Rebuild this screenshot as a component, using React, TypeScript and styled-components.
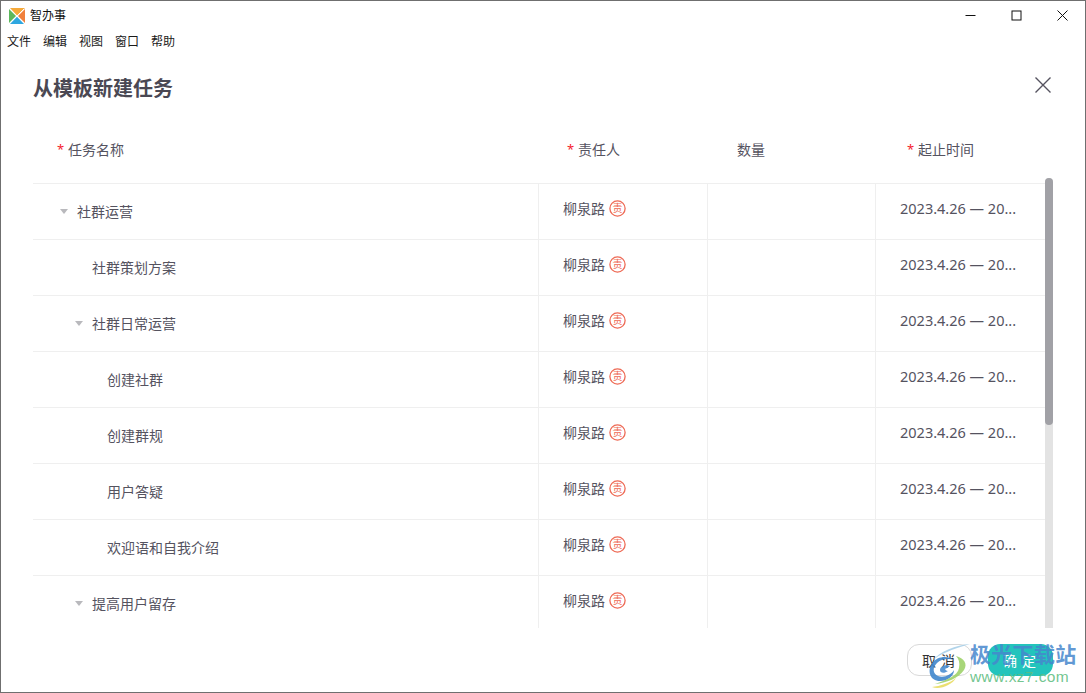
import React from "react";
import styled, { createGlobalStyle } from "styled-components";

const Global = createGlobalStyle`
  html, body { margin: 0; padding: 0; background: #fff; }
  body { font-family: "Noto Sans", "Noto Sans CJK SC", sans-serif; }
  * { box-sizing: border-box; }
`;

const Win = styled.div`
  position: relative;
  width: 1086px;
  height: 693px;
  background: #fff;
  border: 1px solid #6f6f6f;
  display: flex;
  flex-direction: column;
  overflow: hidden;
`;

const TitleBar = styled.div`
  height: 29px;
  flex: none;
  display: flex;
  align-items: center;
  padding-left: 8px;
  gap: 5px;
  font-size: 12px;
  color: #111;
`;
const AppName = styled.span`
  position: relative;
  top: -1px;
`;
const WinButtons = styled.div`
  margin-left: auto;
  display: flex;
  align-items: center;
`;
const WinBtn = styled.div`
  width: 46px;
  height: 29px;
  display: flex;
  align-items: center;
  justify-content: center;
`;
const Menu = styled.div`
  height: 23px;
  flex: none;
  display: flex;
  padding-left: 6px;
  gap: 12px;
  font-size: 12px;
  line-height: 23px;
  color: #1a1a1a;
`;
const Dialog = styled.div`
  flex: 1;
  display: flex;
  flex-direction: column;
  padding: 0 32px 0 32px;
  min-height: 0;
`;
const TitleRow = styled.div`
  height: 74px;
  flex: none;
  display: flex;
  justify-content: space-between;
  align-items: flex-start;
`;
const Title = styled.div`
  font-size: 20px;
  font-weight: 700;
  color: #4a4853;
  line-height: 28px;
  margin-top: 22px;
`;
const CloseBtn = styled.div`
  margin: 23px 1px 0 0;
  width: 18px;
  height: 18px;
  display: flex;
`;
const Body = styled.div`
  height: 501px;
  flex: none;
  display: flex;
  overflow: hidden;
`;
const Table = styled.div`
  width: 1012px;
  flex: none;
`;
const HeadRow = styled.div`
  display: grid;
  grid-template-columns: 506px 169px 168px 169px;
  height: 57px;
  align-items: center;
  border-bottom: 1px solid #efefef;
  font-size: 14px;
  color: #55535f;
`;
const HeadCell = styled.div<{ $pad: number }>`
  padding-left: ${(p) => p.$pad}px;
  margin-top: -13px;
  display: flex;
  align-items: center;
  white-space: nowrap;
`;
const Star = styled.span`
  color: #f5222d;
  font-size: 13px;
  width: 11px;
  line-height: 1;
  position: relative;
  top: 1px;
`;
const Row = styled.div`
  display: grid;
  grid-template-columns: 506px 169px 168px 169px;
  height: 56px;
  border-bottom: 1px solid #efefef;
  font-size: 14px;
  color: #55535f;
`;
const Cell = styled.div`
  border-right: 1px solid #efefef;
  display: flex;
  align-items: center;
  white-space: nowrap;
  &:last-child { border-right: none; }
`;
const NameCell = styled(Cell)<{ $indent: number }>`
  padding-left: ${(p) => p.$indent}px;
  padding-bottom: 1px;
`;
const Caret = styled.span`
  width: 0;
  height: 0;
  border-left: 4.5px solid transparent;
  border-right: 4.5px solid transparent;
  border-top: 5px solid #b9b9bd;
  margin-right: 9px;
  margin-left: -18px;
`;
const PersonCell = styled(Cell)`
  padding-left: 24px;
  padding-bottom: 8px;
  gap: 4px;
`;
const BadgeIcon = styled.svg`
  margin-top: 2px;
`;
const DateCell = styled(Cell)`
  padding-left: 24px;
  padding-bottom: 8px;
  font-size: 14.5px;
`;
const Scroll = styled.div`
  position: relative;
  width: 8px;
  flex: none;
  background: #e3e3e3;
  margin-top: 51px;
  border-radius: 4px 4px 0 0;
`;
const Thumb = styled.div`
  height: 247px;
  background: #a1a1a6;
  border-radius: 4px;
`;
const Footer = styled.div`
  flex: 1;
  display: flex;
  justify-content: flex-end;
  align-items: flex-start;
  padding-top: 16px;
  gap: 16px;
`;
const Btn = styled.div<{ $primary?: boolean }>`
  width: 65px;
  height: 32px;
  border-radius: 12px;
  display: flex;
  align-items: center;
  justify-content: center;
  font-size: 14px;
  letter-spacing: 5px;
  text-indent: 3px;
  color: ${(p) => (p.$primary ? "#fff" : "#333")};
  background: ${(p) => (p.$primary ? "#23c4bc" : "#fff")};
  border: ${(p) => (p.$primary ? "none" : "1px solid #d9d9d9")};
`;
const Watermark = styled.div`
  position: absolute;
  left: 925px;
  top: 640px;
  width: 160px;
  height: 50px;
  pointer-events: none;
`;
const WmCn = styled.div`
  position: absolute;
  left: 44px;
  top: -1px;
  font-size: 21px;
  font-weight: 700;
  line-height: 28px;
  letter-spacing: 0.3px;
  color: rgba(70, 135, 205, 0.85);
  white-space: nowrap;
`;
const WmEn = styled.div`
  position: absolute;
  left: 44px;
  top: 26px;
  font-size: 15.5px;
  line-height: 20px;
  letter-spacing: 0.4px;
  font-family: "Liberation Sans", sans-serif;
  color: rgba(95, 190, 130, 0.9);
  white-space: nowrap;
`;
const WmLogo = styled.svg`
  position: absolute;
  left: 0;
  top: 0;
`;

const rows: [string, number, boolean][] = [
  ["社群运营", 45, true],
  ["社群策划方案", 59, false],
  ["社群日常运营", 60, true],
  ["创建社群", 74, false],
  ["创建群规", 74, false],
  ["用户答疑", 74, false],
  ["欢迎语和自我介绍", 74, false],
  ["提高用户留存", 60, true],
  ["提升用户粘性", 74, false],
];

const Badge = () => (
  <BadgeIcon width="17" height="17" viewBox="0 0 17 17">
    <circle cx="8.5" cy="8.5" r="7.6" fill="none" stroke="#ee6a55" strokeWidth="1.3" />
    <text x="8.5" y="12" textAnchor="middle" fontSize="10" fill="#ee6a55" fontFamily="Noto Sans CJK SC">
      责
    </text>
  </BadgeIcon>
);

export default function App() {
  return (
    <Win>
      <Global />
      <TitleBar>
        <svg width="16" height="16" viewBox="0 0 16 16">
          <path d="M0 1 L7 8 L0 15 Z" fill="#5cb85c" />
          <path d="M1 0 H16 L8 7.5 Z" fill="#f5a93a" />
          <path d="M16 1 V15 L9 8 Z" fill="#f0803c" />
          <path d="M1 16 L8 8.8 L15 16 Z" fill="#2ea7e0" />
          <path d="M1 1L15 15M15 1L1 15" stroke="#fff" strokeWidth="1" />
        </svg>
        <AppName>智办事</AppName>
        <WinButtons>
          <WinBtn>
            <svg width="11" height="11" viewBox="0 0 11 11"><path d="M0.5 5.5H10.5" stroke="#111" strokeWidth="1" /></svg>
          </WinBtn>
          <WinBtn>
            <svg width="11" height="11" viewBox="0 0 11 11"><rect x="1" y="1" width="9" height="9" fill="none" stroke="#111" strokeWidth="1" /></svg>
          </WinBtn>
          <WinBtn>
            <svg width="11" height="11" viewBox="0 0 11 11"><path d="M0.5 0.5L10.5 10.5M10.5 0.5L0.5 10.5" stroke="#111" strokeWidth="1" /></svg>
          </WinBtn>
        </WinButtons>
      </TitleBar>
      <Menu>
        <span>文件</span>
        <span>编辑</span>
        <span>视图</span>
        <span>窗口</span>
        <span>帮助</span>
      </Menu>
      <Dialog>
        <TitleRow>
          <Title>从模板新建任务</Title>
          <CloseBtn>
            <svg width="18" height="18" viewBox="0 0 18 18"><path d="M1.5 1.5L16.5 16.5M16.5 1.5L1.5 16.5" stroke="#55535f" strokeWidth="1.4" /></svg>
          </CloseBtn>
        </TitleRow>
        <Body>
          <Table>
            <HeadRow>
              <HeadCell $pad={24}><Star>*</Star>任务名称</HeadCell>
              <HeadCell $pad={28}><Star>*</Star>责任人</HeadCell>
              <HeadCell $pad={29}>数量</HeadCell>
              <HeadCell $pad={31}><Star>*</Star>起止时间</HeadCell>
            </HeadRow>
            {rows.map(([name, indent, caret]) => (
              <Row key={name}>
                <NameCell $indent={indent}>
                  {caret && <Caret />}
                  {name}
                </NameCell>
                <PersonCell>
                  柳泉路
                  <Badge />
                </PersonCell>
                <Cell />
                <DateCell>2023.4.26 — 20...</DateCell>
              </Row>
            ))}
          </Table>
          <Scroll>
            <Thumb />
          </Scroll>
        </Body>
        <Footer>
          <Btn>取消</Btn>
          <Btn $primary>确定</Btn>
        </Footer>
      </Dialog>
      <Watermark>
        <WmLogo width="46" height="50" viewBox="0 0 46 50">
          <path d="M44 3 C30 4 14 10 6 20 C12 14 26 8 44 3Z" fill="#a9cfe8" opacity="0.9" />
          <path d="M6 22 C1 30 4 40 14 40 C22 40 28 35 28 29 C25 34 18 37 12 35 C7 33 6 27 11 22 C15 18 22 17 28 19 C22 14 11 15 6 22Z" fill="#3f86cc" opacity="0.9" />
          <path d="M14 29 C14 25 20 23 24 25 C22 27 20 27 19 28 C20 30 22 30 22 30 C18 33 14 32 14 29Z" fill="#4a8ed0" opacity="0.9" />
          <path d="M30 15 C38 17 42 23 38 29 C33 37 20 42 9 43 C20 39 32 35 33 27 C34 22 33 18 30 15Z" fill="#9ed26a" opacity="0.9" />
          <path d="M6 46 C14 45 24 42 30 37 C26 44 14 49 6 46Z" fill="#e8dc60" opacity="0.9" />
        </WmLogo>
        <WmCn>极光下载站</WmCn>
        <WmEn>www.xz7.com</WmEn>
      </Watermark>
    </Win>
  );
}
